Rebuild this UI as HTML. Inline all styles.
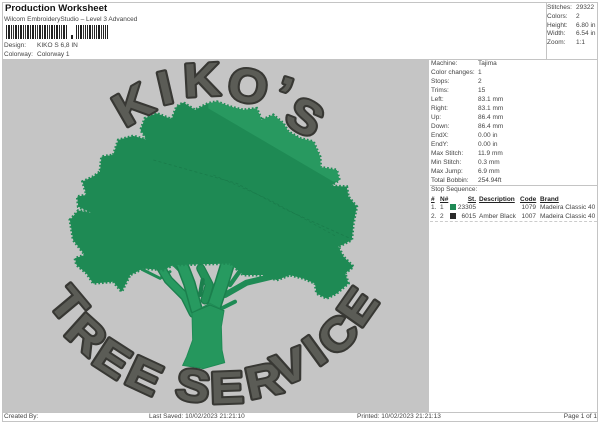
<!DOCTYPE html>
<html>
<head>
<meta charset="utf-8">
<style>
html,body{margin:0;padding:0;background:#fff}
#p{position:relative;width:600px;height:424px;overflow:hidden;background:#fff;font-family:"Liberation Sans",sans-serif;font-size:6.5px;color:#444}
#p div{position:absolute;white-space:nowrap}
.t{line-height:9px;height:9px}
.l{background:#c4c4c4}
.u{text-decoration:underline;font-weight:bold;color:#222}
</style>
</head>
<body>
<div id="p">
<div class="l" style="left:2px;top:2px;width:596px;height:1px"></div>
<div class="l" style="left:2px;top:2px;width:1px;height:420px"></div>
<div class="l" style="left:597px;top:2px;width:1px;height:420px"></div>
<div class="l" style="left:2px;top:421px;width:596px;height:1px"></div>
<div class="l" style="left:2px;top:412px;width:596px;height:1px"></div>
<div class="l" style="left:2px;top:59px;width:596px;height:1px"></div>
<div class="l" style="left:546px;top:2px;width:1px;height:58px"></div>
<div class="l" style="left:430px;top:185px;width:167px;height:1px"></div>
<div style="left:430px;top:221px;width:167px;height:0;border-top:1px dashed #ccc"></div>

<div style="left:5px;top:2px;font-size:9.6px;line-height:13px;font-weight:bold;color:#111">Production Worksheet</div>
<div class="t" style="left:4px;top:15px">Wilcom EmbroideryStudio – Level 3 Advanced</div>
<div style="left:6px;top:25px;width:62px;height:14px;background:repeating-linear-gradient(90deg,#222 0 1px,#fff 1px 2px,#222 2px 4px,#fff 4px 5px,#222 5px 6px,#fff 6px 7px,#333 7px 8px,#fff 8px 9px,#222 9px 11px,#fff 11px 12px)"></div>
<div style="left:76px;top:25px;width:32px;height:14px;background:repeating-linear-gradient(90deg,#222 0 1px,#fff 1px 2px,#222 2px 3px,#fff 3px 4px,#222 4px 6px,#fff 6px 7px,#333 7px 8px,#fff 8px 9px)"></div>
<div style="left:71px;top:35px;width:2px;height:4px;background:#222"></div>
<div class="t" style="left:4px;top:41px">Design:</div>
<div class="t" style="left:37px;top:41px">KIKO S 6,8 IN</div>
<div class="t" style="left:4px;top:50px">Colorway:</div>
<div class="t" style="left:37px;top:50px">Colorway 1</div>

<div class="t" style="left:547px;top:3px">Stitches:</div><div class="t" style="left:576px;top:3px">29322</div>
<div class="t" style="left:547px;top:12px">Colors:</div><div class="t" style="left:576px;top:12px">2</div>
<div class="t" style="left:547px;top:21px">Height:</div><div class="t" style="left:576px;top:21px">6.80 in</div>
<div class="t" style="left:547px;top:29px">Width:</div><div class="t" style="left:576px;top:29px">6.54 in</div>
<div class="t" style="left:547px;top:38px">Zoom:</div><div class="t" style="left:576px;top:38px">1:1</div>

<div class="t" style="left:431px;top:59px">Machine:</div><div class="t" style="left:478px;top:59px">Tajima</div>
<div class="t" style="left:431px;top:68px">Color changes:</div><div class="t" style="left:478px;top:68px">1</div>
<div class="t" style="left:431px;top:77px">Stops:</div><div class="t" style="left:478px;top:77px">2</div>
<div class="t" style="left:431px;top:86px">Trims:</div><div class="t" style="left:478px;top:86px">15</div>
<div class="t" style="left:431px;top:95px">Left:</div><div class="t" style="left:478px;top:95px">83.1 mm</div>
<div class="t" style="left:431px;top:104px">Right:</div><div class="t" style="left:478px;top:104px">83.1 mm</div>
<div class="t" style="left:431px;top:113px">Up:</div><div class="t" style="left:478px;top:113px">86.4 mm</div>
<div class="t" style="left:431px;top:122px">Down:</div><div class="t" style="left:478px;top:122px">86.4 mm</div>
<div class="t" style="left:431px;top:131px">EndX:</div><div class="t" style="left:478px;top:131px">0.00 in</div>
<div class="t" style="left:431px;top:140px">EndY:</div><div class="t" style="left:478px;top:140px">0.00 in</div>
<div class="t" style="left:431px;top:149px">Max Stitch:</div><div class="t" style="left:478px;top:149px">11.9 mm</div>
<div class="t" style="left:431px;top:158px">Min Stitch:</div><div class="t" style="left:478px;top:158px">0.3 mm</div>
<div class="t" style="left:431px;top:167px">Max Jump:</div><div class="t" style="left:478px;top:167px">6.9 mm</div>
<div class="t" style="left:431px;top:176px">Total Bobbin:</div><div class="t" style="left:478px;top:176px">254.94ft</div>
<div class="t" style="left:431px;top:185px">Stop Sequence:</div>

<div class="t u" style="left:431px;top:195px">#</div>
<div class="t u" style="left:440px;top:195px">N#</div>
<div class="t u" style="right:124px;top:195px">St.</div>
<div class="t u" style="left:479px;top:195px">Description</div>
<div class="t u" style="left:520px;top:195px">Code</div>
<div class="t u" style="left:540px;top:195px">Brand</div>

<div class="t" style="left:431px;top:203px">1.</div>
<div class="t" style="left:440px;top:203px">1</div>
<div style="left:450px;top:204px;width:6px;height:6px;background:#1f8a55"></div>
<div class="t" style="right:124px;top:203px">23305</div>
<div class="t" style="right:64px;top:203px">1079</div>
<div class="t" style="left:540px;top:203px">Madeira Classic 40</div>

<div class="t" style="left:431px;top:212px">2.</div>
<div class="t" style="left:440px;top:212px">2</div>
<div style="left:450px;top:213px;width:6px;height:6px;background:#2a2a2a"></div>
<div class="t" style="right:124px;top:212px">6015</div>
<div class="t" style="left:479px;top:212px">Amber Black</div>
<div class="t" style="right:64px;top:212px">1007</div>
<div class="t" style="left:540px;top:212px">Madeira Classic 40</div>

<div class="t" style="left:4px;top:412px">Created By:</div>
<div class="t" style="left:149px;top:412px">Last Saved: 10/02/2023 21:21:10</div>
<div class="t" style="left:357px;top:412px">Printed: 10/02/2023 21:21:13</div>
<div class="t" style="right:3px;top:412px">Page 1 of 1</div>

<svg style="position:absolute;left:3px;top:60px" width="426" height="352" viewBox="3 60 426 352" xmlns="http://www.w3.org/2000/svg">
<defs>
<pattern id="h" width="2" height="2" patternUnits="userSpaceOnUse" patternTransform="rotate(45)">
<rect width="2" height="2" fill="#1f8d56"/><rect width="2" height="1" fill="#1d8752"/>
</pattern>
<pattern id="h2" width="2" height="2" patternUnits="userSpaceOnUse" patternTransform="rotate(45)">
<rect width="2" height="2" fill="#2a9c63"/><rect width="2" height="1" fill="#26965d"/>
</pattern>
<clipPath id="c"><path id="cp" d="M0 480L25 452L70 460L25 440L22 410L50 405L38 365L70 350L90 335L95 290L130 285L145 240L190 228L232 240L212 210L225 175L260 160L305 178L320 140L340 128L375 150L415 130L440 125L480 140L520 150L560 145L575 180L610 165L640 190L655 215L690 235L730 245L750 290L752 322L800 330L808 360L780 378L830 380L835 410L860 440L850 490L845 540L805 560L820 590L850 620L825 640L835 670L800 700L770 715L740 700L735 670L700 655L660 645L620 660L580 645L520 645L480 610L310 615L280 630L220 625L180 645L155 695L130 665L70 670L50 640L20 615L15 595L45 585L10 540Z"/></clipPath>
</defs>
<rect x="3" y="60" width="426" height="352" fill="#c5c5c5"/>

<!-- branches, coordinates at 3x from (150,250) -->
<g transform="translate(150,250) scale(.33333)" fill="none" stroke-linecap="round" stroke-linejoin="round">
<path d="M-20 60L30 85L60 65" stroke="#1f8b55" stroke-width="9"/>
<path d="M225 135L290 98L365 80" stroke="#1f8b55" stroke-width="18"/>
<path d="M240 105L272 60" stroke="#1f8b55" stroke-width="13"/>
<path d="M205 180L255 155" stroke="#1f8b55" stroke-width="12"/>
<path d="M130 190L105 140L55 90L28 45" stroke="#1b7f4d" stroke-width="28"/>
<path d="M130 190L105 140L55 90L28 45" stroke="#279a60" stroke-width="20"/>
<path d="M70 40L105 75" stroke="#1f8b55" stroke-width="14"/>
<path d="M140 180L118 100L95 40" stroke="#1b7f4d" stroke-width="38"/>
<path d="M140 180L118 100L95 40" stroke="#279a60" stroke-width="29"/>
<path d="M152 55L178 105L165 150" stroke="#1b7f4d" stroke-width="27"/>
<path d="M152 55L178 105L165 150" stroke="#239158" stroke-width="20"/>
<path d="M150 135L158 90" stroke="#1b7f4d" stroke-width="13"/>
<path d="M190 175L215 100L235 35" stroke="#1b7f4d" stroke-width="44"/>
<path d="M190 175L215 100L235 35" stroke="#279a60" stroke-width="35"/>
</g>
<!-- trunk -->
<g transform="translate(30,240) scale(.33333)">
<path d="M486 218L540 190L582 212L574 260L576 330L584 368L520 386L458 376L470 350L488 300Z" fill="#25975d" stroke="#1f8b55" stroke-width="3"/>
<path d="M486 218L540 195L582 212" fill="none" stroke="#1b7f4d" stroke-width="3"/>
</g>

<!-- canopy -->
<g transform="translate(70,60) scale(.33333)">
<use href="#cp" fill="#1f8b55" stroke="#1f8b55" stroke-width="9" stroke-dasharray="5 6"/>
<use href="#cp" fill="url(#h)"/>
<g clip-path="url(#c)">
<path d="M415 145L790 365L900 360L900 60L415 60Z" fill="url(#h2)"/>
<path d="M250 300L500 370L650 450L840 535" fill="none" stroke="#1a7c4b" stroke-width="2.5" stroke-dasharray="9 7"/>
<path d="M430 345L600 420L800 530" fill="none" stroke="#1a7c4b" stroke-width="2" stroke-dasharray="8 8"/>
</g>
</g>

<!-- lettering -->
<g font-family="'Liberation Sans',sans-serif" font-weight="bold" text-anchor="middle" fill="#5b5c56" stroke="#383834" stroke-width="4" stroke-linejoin="round" paint-order="stroke">
<g font-size="47">
<text transform="translate(133,105) rotate(-30) scale(1.08,1) translate(0,16)">K</text>
<text transform="translate(165,88) rotate(-13) scale(1.08,1) translate(0,16)">I</text>
<text transform="translate(202,80) rotate(-3) scale(1.08,1) translate(0,16)">K</text>
<text transform="translate(248,86) rotate(10) scale(1.08,1) translate(0,16)">O</text>
<text transform="translate(285,90) rotate(18) scale(1.08,1) translate(0,22)" font-size="50">’</text>
<text transform="translate(305,117) rotate(30) scale(1.08,1) translate(0,16)">S</text>
</g>
<g font-size="45">
<text transform="translate(68,305) rotate(50) scale(1.12,1) translate(0,15)">T</text>
<text transform="translate(86,335) rotate(42) scale(1.12,1) translate(0,15)">R</text>
<text transform="translate(112,359) rotate(33) scale(1.12,1) translate(0,15)">E</text>
<text transform="translate(144,376) rotate(25) scale(1.12,1) translate(0,15)">E</text>
<text transform="translate(193,386) rotate(8) scale(1.12,1) translate(0,15)">S</text>
<text transform="translate(227,388) rotate(-2) scale(1.12,1) translate(0,15)">E</text>
<text transform="translate(264,381) rotate(-12) scale(1.12,1) translate(0,15)">R</text>
<text transform="translate(290,367) rotate(-22) scale(1.12,1) translate(0,15)">V</text>
<text transform="translate(315,351) rotate(-36) scale(1.12,1) translate(0,15)">I</text>
<text transform="translate(338,335) rotate(-45) scale(1.12,1) translate(0,15)">C</text>
<text transform="translate(358,307) rotate(-55) scale(1.12,1) translate(0,15)">E</text>
</g>
</g>
</svg>
</div>
</body>
</html>
